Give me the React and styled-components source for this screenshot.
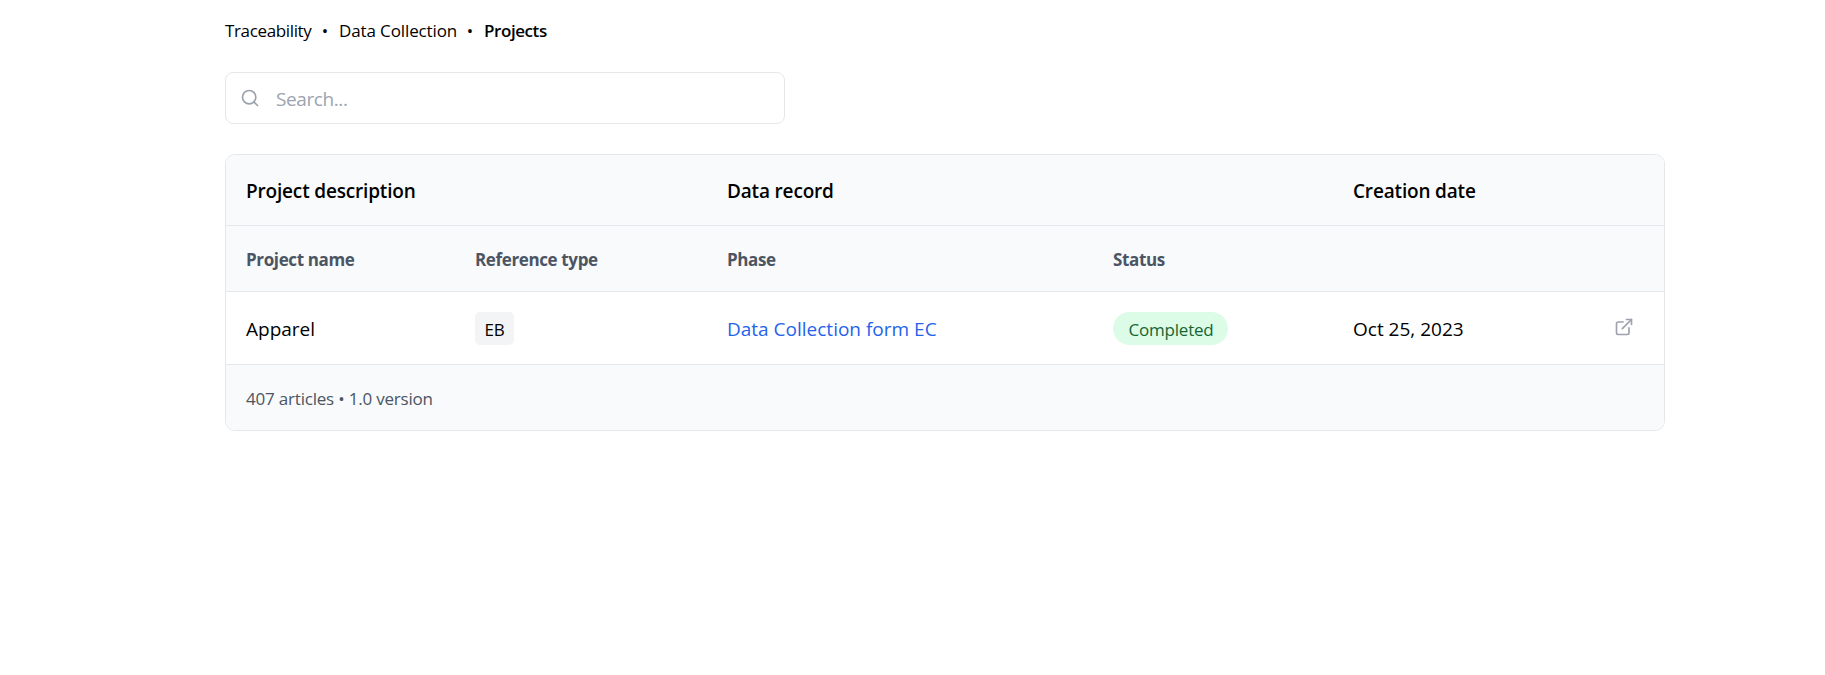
import React from "react";
import styled, { createGlobalStyle } from "styled-components";
import { FiExternalLink, FiSearch } from "react-icons/fi";

const GlobalStyle = createGlobalStyle`
  *, *::before, *::after { box-sizing: border-box; }
  body {
    margin: 0;
    background: #fff;
    color: #000;
    font-family: "Segoe UI", "Open Sans", "Noto Sans", sans-serif;
    font-size: 19px;
  }
`;

const Page = styled.main`
  width: 1440px;
  margin: 0 0 0 225px;
  padding-top: 18px;
`;

const Breadcrumbs = styled.nav`
  display: flex;
  height: 25px;
  line-height: 25px;
  font-size: 17px;
  white-space: nowrap;
`;

const Crumb = styled.span`
  width: ${(p) => p.$width}px;
  font-weight: ${(p) => (p.$current ? 600 : 400)};
  letter-spacing: ${(p) => p.$track || 0}px;
`;

const Dot = styled.span`
  width: 28px;
  text-align: center;
`;

const SearchBox = styled.label`
  display: flex;
  align-items: center;
  gap: 16px;
  width: 560px;
  height: 52px;
  margin-top: 29px;
  padding: 0 15px 0 14px;
  border: 1px solid #e5e7eb;
  border-radius: 8px;
  color: #9ca3af;
`;

const SearchInput = styled.input`
  flex: 1;
  min-width: 0;
  padding: 2px 0 0;
  border: 0;
  outline: 0;
  background: transparent;
  font: inherit;
  letter-spacing: -0.4px;
  &::placeholder { color: #9ca3af; opacity: 1; }
`;

const Card = styled.section`
  margin-top: 30px;
  border: 1px solid #e5e7eb;
  border-radius: 10px;
  overflow: hidden;
`;

const Row = styled.div`
  display: grid;
  grid-template-columns: 229px 252px 386px 240px 1fr;
  align-items: center;
  height: ${(p) => p.$height}px;
  border-bottom: 1px solid #e5e7eb;
  background: ${(p) => (p.$muted ? "#f9fafb" : "#fff")};
  &:last-child { border-bottom: 0; }
`;

const Cell = styled.div`
  display: flex;
  align-items: center;
  justify-content: space-between;
  grid-column: span ${(p) => p.$span || 1};
  padding: 2px 30px 0 20px;
  line-height: 30px;
  white-space: nowrap;
`;

const GroupHeading = styled(Cell)`
  font-weight: 600;
  letter-spacing: -0.17px;
`;

const ColumnHeading = styled(Cell)`
  font-size: 17px;
  font-weight: 700;
  letter-spacing: -0.37px;
  color: #4b5563;
`;

const Footnote = styled(Cell)`
  font-size: 17px;
  letter-spacing: -0.2px;
  color: #4b5563;
`;

const BadgeCell = styled(Cell)`
  padding-top: 0;
`;

const Tag = styled.span`
  width: 39px;
  height: 33px;
  border-radius: 5px;
  background: #f3f4f6;
  font-size: 17px;
  line-height: 35px;
  letter-spacing: -0.3px;
  text-align: center;
`;

const StatusPill = styled.span`
  width: 115px;
  height: 33px;
  padding-left: 1px;
  border-radius: 17px;
  background: #dcfce7;
  color: #166534;
  font-size: 17px;
  line-height: 35px;
  letter-spacing: -0.2px;
  text-align: center;
`;

const FormLink = styled.a`
  color: #2563eb;
`;

const OpenIcon = styled(FiExternalLink)`
  display: block;
  color: #9ca3af;
  margin-bottom: 5px;
`;

export default function App() {
  return (
    <>
      <GlobalStyle />
      <Page>
        <Breadcrumbs>
          <Crumb $width={86} $track={-0.36}>Traceability</Crumb>
          <Dot>•</Dot>
          <Crumb $width={117} $track={-0.12}>Data Collection</Crumb>
          <Dot>•</Dot>
          <Crumb $width={64} $track={-0.42} $current>Projects</Crumb>
        </Breadcrumbs>
        <SearchBox>
          <FiSearch size={20} />
          <SearchInput placeholder="Search..." />
        </SearchBox>
        <Card>
          <Row $height={71} $muted>
            <GroupHeading $span={2}>Project description</GroupHeading>
            <GroupHeading $span={2}>Data record</GroupHeading>
            <GroupHeading>Creation date</GroupHeading>
          </Row>
          <Row $height={66} $muted>
            <ColumnHeading>Project name</ColumnHeading>
            <ColumnHeading>Reference type</ColumnHeading>
            <ColumnHeading>Phase</ColumnHeading>
            <ColumnHeading>Status</ColumnHeading>
            <ColumnHeading />
          </Row>
          <Row $height={73}>
            <Cell>Apparel</Cell>
            <BadgeCell><Tag>EB</Tag></BadgeCell>
            <Cell><FormLink>Data Collection form EC</FormLink></Cell>
            <BadgeCell><StatusPill>Completed</StatusPill></BadgeCell>
            <Cell>Oct 25, 2023<OpenIcon size={20} /></Cell>
          </Row>
          <Row $height={65} $muted>
            <Footnote $span={5}>407 articles • 1.0 version</Footnote>
          </Row>
        </Card>
      </Page>
    </>
  );
}
